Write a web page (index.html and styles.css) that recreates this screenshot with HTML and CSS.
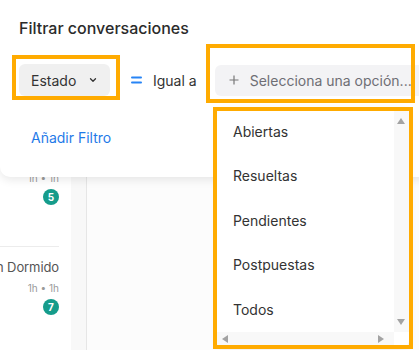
FILE: index.html
```html
<!DOCTYPE html>
<html lang="es">
<head>
    <meta charset="UTF-8">
    <title>Filtrar conversaciones</title>
    <link rel="stylesheet" href="styles.css">
</head>
<body>

<div class="app">
    <aside class="sidebar">
        <div class="conv-list">
            <div class="conv">
                <div class="conv-name">Ana Ruiz</div>
                <div class="conv-meta">1h • 1h</div>
                <span class="badge">5</span>
            </div>
            <div class="conv">
                <div class="conv-name">n Dormido</div>
                <div class="conv-meta">1h • 1h</div>
                <span class="badge">7</span>
            </div>
        </div>
        <div class="sidebar-strip"></div>
    </aside>
    <main class="main"></main>
</div>

<!-- Filter popover -->
<div class="popover">
    <div class="popover-title">Filtrar conversaciones</div>
    <div class="filter-row">
        <button class="field-button">
            Estado
            <svg class="chevron" width="10" height="10" viewBox="0 0 10 10">
                <path d="M2.5 3.8 L5 6.3 L7.5 3.8" fill="none" stroke="#333" stroke-width="1.3" stroke-linecap="round" stroke-linejoin="round"/>
            </svg>
        </button>
        <span class="operator">
            <svg width="11" height="8" viewBox="0 0 11 8">
                <rect x="0" y="0.5" width="11" height="2" rx="1" fill="#2784f5"/>
                <rect x="0" y="5.5" width="11" height="2" rx="1" fill="#2784f5"/>
            </svg>
            Igual a
        </span>
        <div class="value-select">
            <svg width="10" height="10" viewBox="0 0 10 10">
                <path d="M5 0.5 V9.5 M0.5 5 H9.5" stroke="#777" stroke-width="1.2"/>
            </svg>
            <span>Selecciona una opción...</span>
        </div>
    </div>
    <a class="add-filter">Añadir Filtro</a>
</div>

<!-- Options list -->
<div class="dropdown">
    <ul class="options">
        <li>Abiertas</li>
        <li>Resueltas</li>
        <li>Pendientes</li>
        <li>Postpuestas</li>
        <li>Todos</li>
    </ul>
    <div class="vscroll">
        <span class="arrow arrow-up"></span>
        <span class="arrow arrow-down"></span>
    </div>
    <div class="hscroll">
        <span class="arrow arrow-left"></span>
        <span class="arrow arrow-right"></span>
    </div>
</div>

<!-- highlight marks -->
<div class="mark mark-field"></div>
<div class="mark mark-value"></div>
<div class="mark mark-options"></div>

</body>
</html>
```

FILE: styles.css
```css
body {
    margin: 0;
    font-family: Inter, "Noto Sans", sans-serif;
    color: #2e2e2e;
    width: 419px;
    height: 350px;
    overflow: hidden;
    position: relative;
    background-color: #fcfcfc;
}
.app {
    display: flex;
    height: 350px;
}
.sidebar {
    display: flex;
    width: 86px;
    border-right: 1px solid #e6e6e6;
}
.conv-list {
    width: 71px;
    background-color: #ffffff;
    padding-top: 136px;
}
.sidebar-strip {
    flex: 1;
    background-color: #f8f8f8;
}
.conv {
    height: 110px;
    box-sizing: border-box;
    margin-right: 12px;
    border-top: 1px solid #ececec;
    padding-top: 12px;
    display: flex;
    flex-direction: column;
    align-items: flex-end;
}
.conv-name {
    white-space: nowrap;
    font-size: 13px;
    line-height: 16px;
    letter-spacing: -0.1px;
    color: #555;
}
.conv-meta {
    margin-top: 6px;
    font-size: 10px;
    line-height: 14px;
    color: #9a9a9a;
}
.badge {
    margin-top: 4px;
    width: 16px;
    height: 16px;
    border-radius: 50%;
    background-color: #159c8b;
    color: #fff;
    font-size: 10px;
    font-weight: 700;
    display: flex;
    align-items: center;
    justify-content: center;
}
.main {
    flex: 1;
    background-color: #fcfcfc;
}
.popover {
    position: absolute;
    top: 0;
    left: 0;
    width: 440px;
    height: 177px;
    box-sizing: border-box;
    padding: 19px 0 0 19px;
    background-color: #ffffff;
    border-radius: 0 0 10px 10px;
    box-shadow: 0 3px 10px rgba(0, 0, 0, 0.09);
}
.popover-title {
    font-size: 16px;
    font-weight: 500;
    line-height: 18px;
    color: #2b2b2b;
}
.filter-row {
    display: flex;
    align-items: center;
    margin-top: 27px;
}
.field-button {
    display: flex;
    align-items: center;
    gap: 7px;
    flex-shrink: 0;
    width: 91px;
    height: 32px;
    padding: 0 0 0 12px;
    border: none;
    border-radius: 6px;
    background-color: #f0f0f0;
    font-family: inherit;
    font-size: 14px;
    color: #333;
}
.chevron {
    margin-left: 5px;
}
.operator {
    display: flex;
    align-items: center;
    gap: 11px;
    flex-shrink: 0;
    margin-left: 21px;
    white-space: nowrap;
    font-size: 14px;
    color: #333;
}
.value-select {
    display: flex;
    align-items: center;
    gap: 11px;
    flex-shrink: 0;
    margin-left: 18px;
    width: 230px;
    height: 31px;
    padding-left: 14px;
    border-radius: 6px;
    background-color: #f3f3f5;
    font-size: 14px;
    color: #6e6e74;
    white-space: nowrap;
}
.add-filter {
    display: block;
    margin-top: 33px;
    margin-left: 12px;
    font-size: 14px;
    color: #1f7ae8;
}
.dropdown {
    position: absolute;
    left: 217px;
    top: 109px;
    width: 192px;
    height: 238px;
    display: grid;
    grid-template-columns: 1fr 15px;
    grid-template-rows: 1fr 15px;
    background-color: #ffffff;
    border-radius: 6px;
    box-shadow: 0 2px 8px rgba(0, 0, 0, 0.08);
    overflow: hidden;
}
.options {
    list-style: none;
    margin: 0;
    padding: 0;
}
.options li {
    height: 44.5px;
    display: flex;
    align-items: center;
    padding-left: 16px;
    font-size: 14px;
    color: #333;
}
.vscroll {
    position: relative;
    background-color: #f8f8f8;
}
.hscroll {
    position: relative;
    grid-column: 1 / 2;
    background-color: #f8f8f8;
}
.arrow {
    position: absolute;
    width: 0;
    height: 0;
    border: 4px solid transparent;
}
.arrow-up {
    top: 9px;
    left: 3px;
    border-bottom: 6px solid #a3a3a3;
    border-top: 0;
}
.arrow-down {
    bottom: 7px;
    left: 3px;
    border-top: 6px solid #a3a3a3;
    border-bottom: 0;
}
.arrow-left {
    top: 3px;
    left: 5px;
    border-right: 6px solid #a3a3a3;
    border-left: 0;
}
.arrow-right {
    top: 3px;
    right: 10px;
    border-left: 6px solid #a3a3a3;
    border-right: 0;
}
.mark {
    position: absolute;
    border: 4px solid #ffab00;
    box-sizing: border-box;
}
.mark-field {
    left: 12px;
    top: 55px;
    width: 108px;
    height: 45px;
}
.mark-value {
    left: 206px;
    top: 44px;
    width: 209px;
    height: 59px;
}
.mark-options {
    left: 213px;
    top: 107px;
    width: 200px;
    height: 242px;
}
```
